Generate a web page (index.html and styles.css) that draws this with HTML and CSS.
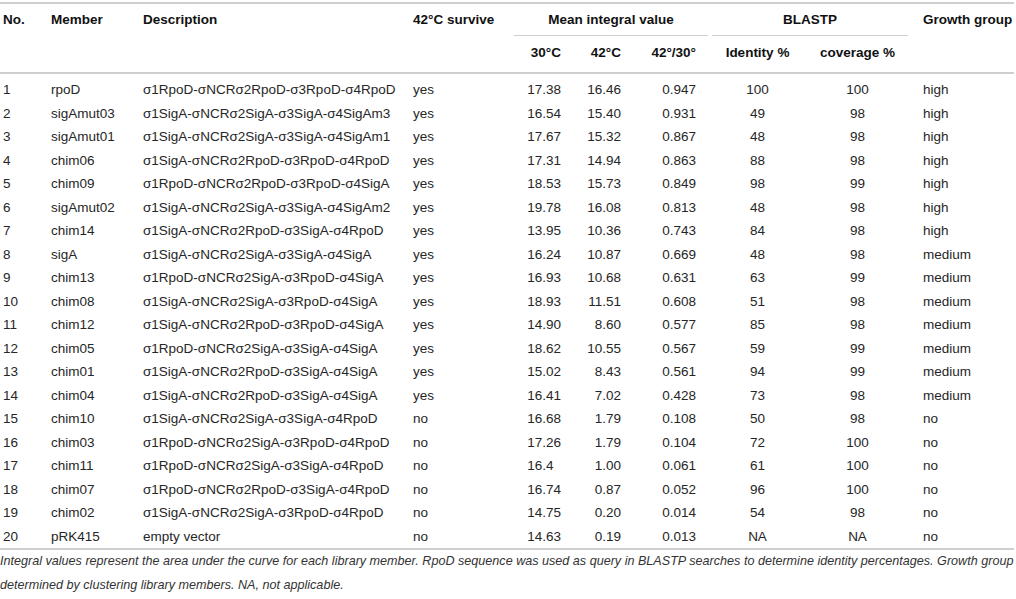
FILE: index.html
```html
<!DOCTYPE html>
<html>
<head>
<meta charset="utf-8">
<link rel="stylesheet" href="styles.css">
</head>
<body>
<table class="data">
  <colgroup>
    <col class="c-no"><col class="c-mem"><col class="c-desc"><col class="c-surv"><col class="c-n30"><col class="c-n42"><col class="c-ratio"><col class="c-id"><col class="c-cov"><col class="c-grp">
  </colgroup>
  <thead>
    <tr class="h1">
      <th rowspan="2" class="l">No.</th>
      <th rowspan="2" class="l">Member</th>
      <th rowspan="2" class="l">Description</th>
      <th rowspan="2" class="l">42°C survive</th>
      <th colspan="3" class="grp"><div class="grp-in">Mean integral value</div></th>
      <th colspan="2" class="grp"><div class="grp-in">BLASTP</div></th>
      <th rowspan="2" class="l grpcol">Growth group</th>
    </tr>
    <tr class="h2">
      <th class="r n30">30°C</th>
      <th class="r n42">42°C</th>
      <th class="r ratio">42°/30°</th>
      <th class="c">Identity %</th>
      <th class="c">coverage %</th>
    </tr>
  </thead>
  <tbody>
    <tr><td>1</td><td>rpoD</td><td>σ1RpoD-σNCRσ2RpoD-σ3RpoD-σ4RpoD</td><td>yes</td><td class="r n30">17.38</td><td class="r n42">16.46</td><td class="r ratio">0.947</td><td class="c">100</td><td class="c">100</td><td class="grpcol">high</td></tr>
    <tr><td>2</td><td>sigAmut03</td><td>σ1SigA-σNCRσ2SigA-σ3SigA-σ4SigAm3</td><td>yes</td><td class="r n30">16.54</td><td class="r n42">15.40</td><td class="r ratio">0.931</td><td class="c">49</td><td class="c">98</td><td class="grpcol">high</td></tr>
    <tr><td>3</td><td>sigAmut01</td><td>σ1SigA-σNCRσ2SigA-σ3SigA-σ4SigAm1</td><td>yes</td><td class="r n30">17.67</td><td class="r n42">15.32</td><td class="r ratio">0.867</td><td class="c">48</td><td class="c">98</td><td class="grpcol">high</td></tr>
    <tr><td>4</td><td>chim06</td><td>σ1SigA-σNCRσ2RpoD-σ3RpoD-σ4RpoD</td><td>yes</td><td class="r n30">17.31</td><td class="r n42">14.94</td><td class="r ratio">0.863</td><td class="c">88</td><td class="c">98</td><td class="grpcol">high</td></tr>
    <tr><td>5</td><td>chim09</td><td>σ1RpoD-σNCRσ2RpoD-σ3RpoD-σ4SigA</td><td>yes</td><td class="r n30">18.53</td><td class="r n42">15.73</td><td class="r ratio">0.849</td><td class="c">98</td><td class="c">99</td><td class="grpcol">high</td></tr>
    <tr><td>6</td><td>sigAmut02</td><td>σ1SigA-σNCRσ2SigA-σ3SigA-σ4SigAm2</td><td>yes</td><td class="r n30">19.78</td><td class="r n42">16.08</td><td class="r ratio">0.813</td><td class="c">48</td><td class="c">98</td><td class="grpcol">high</td></tr>
    <tr><td>7</td><td>chim14</td><td>σ1SigA-σNCRσ2RpoD-σ3SigA-σ4RpoD</td><td>yes</td><td class="r n30">13.95</td><td class="r n42">10.36</td><td class="r ratio">0.743</td><td class="c">84</td><td class="c">98</td><td class="grpcol">high</td></tr>
    <tr><td>8</td><td>sigA</td><td>σ1SigA-σNCRσ2SigA-σ3SigA-σ4SigA</td><td>yes</td><td class="r n30">16.24</td><td class="r n42">10.87</td><td class="r ratio">0.669</td><td class="c">48</td><td class="c">98</td><td class="grpcol">medium</td></tr>
    <tr><td>9</td><td>chim13</td><td>σ1RpoD-σNCRσ2SigA-σ3RpoD-σ4SigA</td><td>yes</td><td class="r n30">16.93</td><td class="r n42">10.68</td><td class="r ratio">0.631</td><td class="c">63</td><td class="c">99</td><td class="grpcol">medium</td></tr>
    <tr><td>10</td><td>chim08</td><td>σ1SigA-σNCRσ2SigA-σ3RpoD-σ4SigA</td><td>yes</td><td class="r n30">18.93</td><td class="r n42">11.51</td><td class="r ratio">0.608</td><td class="c">51</td><td class="c">98</td><td class="grpcol">medium</td></tr>
    <tr><td>11</td><td>chim12</td><td>σ1SigA-σNCRσ2RpoD-σ3RpoD-σ4SigA</td><td>yes</td><td class="r n30">14.90</td><td class="r n42">8.60</td><td class="r ratio">0.577</td><td class="c">85</td><td class="c">98</td><td class="grpcol">medium</td></tr>
    <tr><td>12</td><td>chim05</td><td>σ1RpoD-σNCRσ2SigA-σ3SigA-σ4SigA</td><td>yes</td><td class="r n30">18.62</td><td class="r n42">10.55</td><td class="r ratio">0.567</td><td class="c">59</td><td class="c">99</td><td class="grpcol">medium</td></tr>
    <tr><td>13</td><td>chim01</td><td>σ1SigA-σNCRσ2RpoD-σ3SigA-σ4SigA</td><td>yes</td><td class="r n30">15.02</td><td class="r n42">8.43</td><td class="r ratio">0.561</td><td class="c">94</td><td class="c">99</td><td class="grpcol">medium</td></tr>
    <tr><td>14</td><td>chim04</td><td>σ1SigA-σNCRσ2RpoD-σ3SigA-σ4SigA</td><td>yes</td><td class="r n30">16.41</td><td class="r n42">7.02</td><td class="r ratio">0.428</td><td class="c">73</td><td class="c">98</td><td class="grpcol">medium</td></tr>
    <tr><td>15</td><td>chim10</td><td>σ1SigA-σNCRσ2SigA-σ3SigA-σ4RpoD</td><td>no</td><td class="r n30">16.68</td><td class="r n42">1.79</td><td class="r ratio">0.108</td><td class="c">50</td><td class="c">98</td><td class="grpcol">no</td></tr>
    <tr><td>16</td><td>chim03</td><td>σ1RpoD-σNCRσ2SigA-σ3RpoD-σ4RpoD</td><td>no</td><td class="r n30">17.26</td><td class="r n42">1.79</td><td class="r ratio">0.104</td><td class="c">72</td><td class="c">100</td><td class="grpcol">no</td></tr>
    <tr><td>17</td><td>chim11</td><td>σ1RpoD-σNCRσ2SigA-σ3SigA-σ4RpoD</td><td>no</td><td class="r n30">16.4<span class="pad">0</span></td><td class="r n42">1.00</td><td class="r ratio">0.061</td><td class="c">61</td><td class="c">100</td><td class="grpcol">no</td></tr>
    <tr><td>18</td><td>chim07</td><td>σ1RpoD-σNCRσ2RpoD-σ3SigA-σ4RpoD</td><td>no</td><td class="r n30">16.74</td><td class="r n42">0.87</td><td class="r ratio">0.052</td><td class="c">96</td><td class="c">100</td><td class="grpcol">no</td></tr>
    <tr><td>19</td><td>chim02</td><td>σ1SigA-σNCRσ2SigA-σ3RpoD-σ4RpoD</td><td>no</td><td class="r n30">14.75</td><td class="r n42">0.20</td><td class="r ratio">0.014</td><td class="c">54</td><td class="c">98</td><td class="grpcol">no</td></tr>
    <tr><td>20</td><td>pRK415</td><td>empty vector</td><td>no</td><td class="r n30">14.63</td><td class="r n42">0.19</td><td class="r ratio">0.013</td><td class="c">NA</td><td class="c">NA</td><td class="grpcol">no</td></tr>
  </tbody>
</table>
<p class="note">Integral values represent the area under the curve for each library member. RpoD sequence was used as query in BLASTP searches to determine identity percentages. Growth group determined by clustering library members. NA, not applicable.</p>
</body>
</html>
```

FILE: styles.css
```css
html, body {
  margin: 0;
  padding: 0;
  background: #ffffff;
}
body {
  font-family: "Liberation Sans", Arial, Helvetica, sans-serif;
  color: #262626;
  width: 1016px;
}
.data {
  width: 1014px;
  table-layout: fixed;
  border-collapse: collapse;
  margin-top: 2px;
  border-top: 2px solid #cfcfcf;
  font-size: 13.5px;
}
.c-no { width: 48px; }
.c-mem { width: 92px; }
.c-desc { width: 270px; }
.c-surv { width: 102px; }
.c-n30 { width: 60px; }
.c-n42 { width: 60px; }
.c-ratio { width: 78px; }
.c-id { width: 95px; }
.c-cov { width: 105px; }
.c-grp { width: 104px; }

thead {
  border-bottom: 2px solid #cfcfcf;
}
tbody {
  border-bottom: 2px solid #cfcfcf;
}
th {
  font-weight: bold;
  color: #111;
  line-height: 16px;
  vertical-align: top;
  white-space: nowrap;
  padding: 0 3px;
  text-align: left;
}
.h1 th {
  padding-top: 8px;
  padding-bottom: 0;
}
.h1 th.grp {
  padding-left: 2px;
  padding-right: 2px;
  text-align: center;
}
.grp-in {
  padding-bottom: 7px;
  border-bottom: 1.5px solid #cfcfcf;
}
.h2 th {
  padding-top: 9px;
  padding-bottom: 11px;
}
td {
  padding: 0 3px;
  line-height: 23.5px;
  white-space: nowrap;
  vertical-align: top;
}
tbody tr:first-child td {
  padding-top: 4px;
}
.l { text-align: left; }
.r { text-align: right; }
.c { text-align: center; }
th.n30, td.n30 { padding-right: 11px; }
th.n42, td.n42 { padding-right: 11px; }
th.ratio, td.ratio { padding-right: 14px; }
th.grpcol, td.grpcol { padding-left: 13px; }
.pad { visibility: hidden; }

.note {
  margin: 0;
  font-style: italic;
  font-size: 12.6px;
  line-height: 23.5px;
  color: #333;
  width: 1016px;
}
```
